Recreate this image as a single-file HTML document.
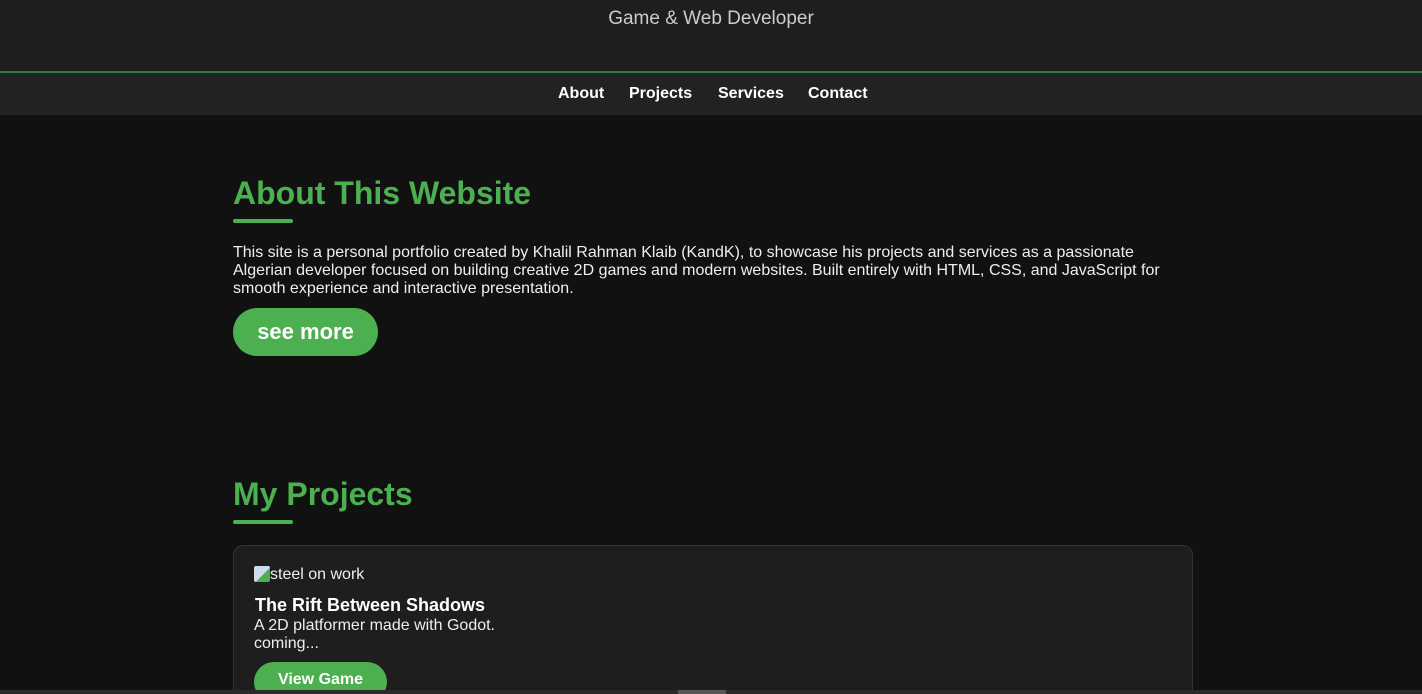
<!DOCTYPE html>
<html><head><meta charset="utf-8"><style>
*{margin:0;padding:0;box-sizing:border-box}
html,body{width:1422px;height:694px;overflow:hidden;background:#111;font-family:"Liberation Sans",Arial,sans-serif;color:#eee}
.wrap{position:relative;width:1422px;height:694px;overflow:hidden}
.top{position:absolute;left:0;top:0;width:1422px;height:71px;background:#1e1e1e;text-align:center}
.top p{position:absolute;left:0;right:0;top:9px;font-size:19px;color:#ccc;line-height:20px}
.line{position:absolute;top:71px;left:0;width:1422px;height:2px;background:#2e7d32}
nav{position:absolute;top:73px;left:0;width:1422px;height:42px;background:#222;text-align:center}
nav a{position:absolute;top:12px;font-size:16px;font-weight:bold;color:#fff;text-decoration:none;line-height:18px}
h2{position:absolute;left:233px;font-size:32px;color:#4caf50;font-weight:bold;line-height:36px}
.bar{position:absolute;left:233px;width:60px;height:4px;background:#4caf50;border-radius:2px}
.txt{position:absolute;left:233px;top:244px;width:950px;font-size:16px;line-height:18px;color:#eee}
.btn{position:absolute;left:233px;top:308px;width:145px;height:48px;border-radius:24px;background:#4caf50;color:#fff;font-size:22px;font-weight:bold;text-align:center;line-height:48px}
.card{position:absolute;left:233px;top:545px;width:960px;height:170px;background:#1e1e1e;border:1px solid #333;border-radius:10px}
.sb{position:absolute;left:0;top:690px;width:1422px;height:4px;background:#2a2a2a}
.sb i{position:absolute;left:678px;width:48px;height:4px;background:#555}
</style></head><body><div class="wrap">
<div class="top"><p>Game &amp; Web Developer</p></div>
<div class="line"></div>
<nav><a style="left:558px">About</a><a style="left:629px">Projects</a><a style="left:718px">Services</a><a style="left:808px">Contact</a></nav>
<h2 style="top:175px">About This Website</h2>
<div class="bar" style="top:219px"></div>
<div class="txt">This site is a personal portfolio created by Khalil Rahman Klaib (KandK), to showcase his projects and services as a passionate Algerian developer focused on building creative 2D games and modern websites. Built entirely with HTML, CSS, and JavaScript for smooth experience and interactive presentation.</div>
<div class="btn">see more</div>
<h2 style="top:476px">My Projects</h2>
<div class="bar" style="top:520px"></div>
<div class="card">
<div style="position:absolute;left:20px;top:20px;font-size:16px;line-height:18px;color:#eee"><span style="display:inline-block;width:16px;height:16px;vertical-align:-3px;background:linear-gradient(135deg,#cde 0 55%,#4caf50 55%);border-radius:2px"></span>steel on work</div>
<div style="position:absolute;left:21px;top:49px;font-size:18px;font-weight:bold;color:#fff">The Rift Between Shadows</div>
<div style="position:absolute;left:20px;top:71px;font-size:16px;line-height:18px;color:#eee">A 2D platformer made with Godot.<br>coming...</div>
<div style="position:absolute;left:20px;top:116px;width:133px;height:40px;border-radius:20px;background:#4caf50;color:#fff;font-weight:bold;font-size:16px;text-align:center;line-height:36px">View Game</div>
</div>
<div class="sb"><i></i></div>
</div></body></html>
